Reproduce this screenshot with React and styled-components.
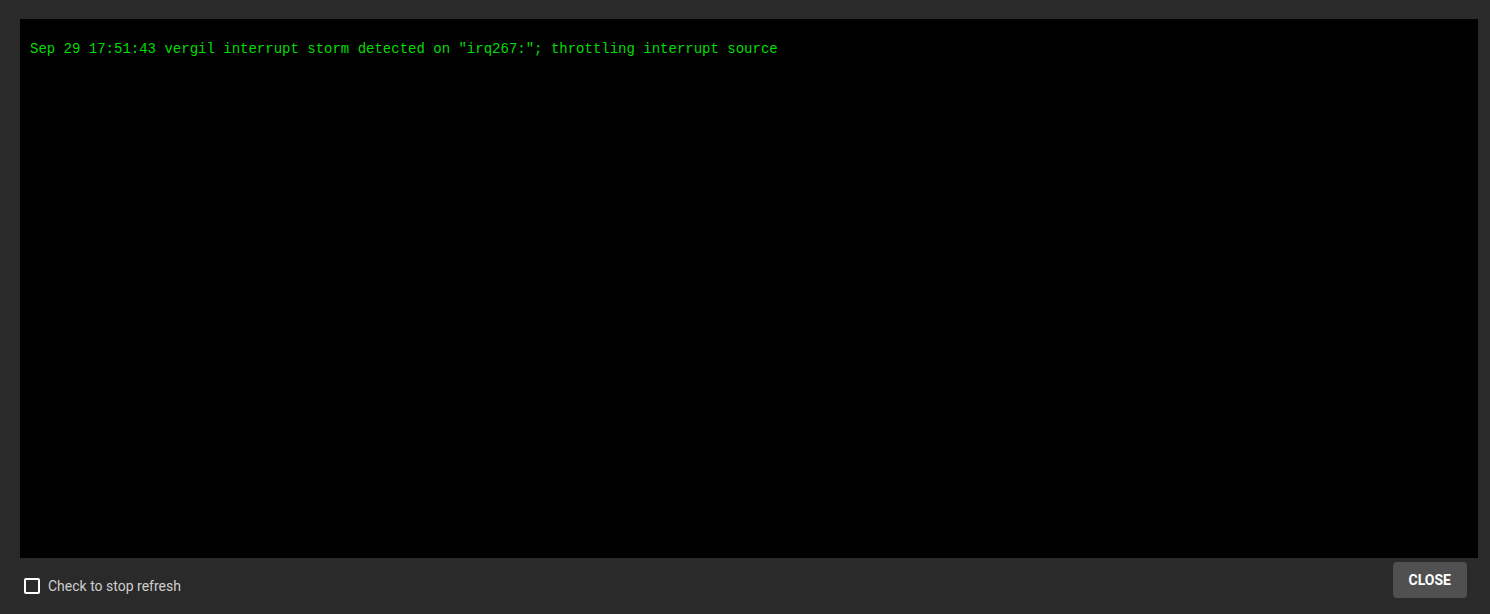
import React, { useState } from "react";
import styled, { createGlobalStyle } from "styled-components";

const Global = createGlobalStyle`
  html, body {
    margin: 0;
    padding: 0;
    background: #2a2a2a;
    height: 100%;
  }
  #root {
    height: 100%;
  }
`;

const Page = styled.div`
  height: 614px;
  box-sizing: border-box;
  padding: 19px 12px 0 20px;
  display: flex;
  flex-direction: column;
  background: #2a2a2a;
  font-family: Roboto, "Liberation Sans", sans-serif;
`;

const Console = styled.pre`
  margin: 0;
  height: 539px;
  flex-shrink: 0;
  box-sizing: border-box;
  background: #000;
  color: #00dd00;
  font-family: "Liberation Mono", "Courier New", monospace;
  font-size: 14px;
  line-height: 16px;
  padding: 22px 10px 10px 10px;
  overflow: auto;
  white-space: pre-wrap;
`;

const Footer = styled.div`
  display: flex;
  align-items: flex-start;
  justify-content: space-between;
  padding: 4px 11px 0 4px;
`;

const CheckLabel = styled.label`
  display: flex;
  align-items: center;
  gap: 8px;
  margin-top: 16px;
  color: #cfcfcf;
  font-size: 14px;
  line-height: 16px;
  cursor: pointer;
  user-select: none;
`;

const Box = styled.span`
  width: 16px;
  height: 16px;
  box-sizing: border-box;
  border: 2px solid #fff;
  border-radius: 2px;
  display: inline-block;
  background: ${(p) => (p.$checked ? "#fff" : "transparent")};
`;

const HiddenInput = styled.input`
  display: none;
`;

const CloseButton = styled.button`
  background: #505050;
  color: #fff;
  border: none;
  border-radius: 4px;
  height: 36px;
  padding: 0 16px;
  font-family: Roboto, "Liberation Sans", sans-serif;
  font-weight: 700;
  font-size: 14px;
  text-transform: uppercase;
  cursor: pointer;
`;

const App = () => {
  const [stop, setStop] = useState(false);
  return (
    <>
      <Global />
      <Page>
        <Console>
          Sep 29 17:51:43 vergil interrupt storm detected on "irq267:"; throttling interrupt source
        </Console>
        <Footer>
          <CheckLabel>
            <HiddenInput type="checkbox" checked={stop} onChange={() => setStop(!stop)} />
            <Box $checked={stop} />
            Check to stop refresh
          </CheckLabel>
          <CloseButton>Close</CloseButton>
        </Footer>
      </Page>
    </>
  );
};

export default App;
